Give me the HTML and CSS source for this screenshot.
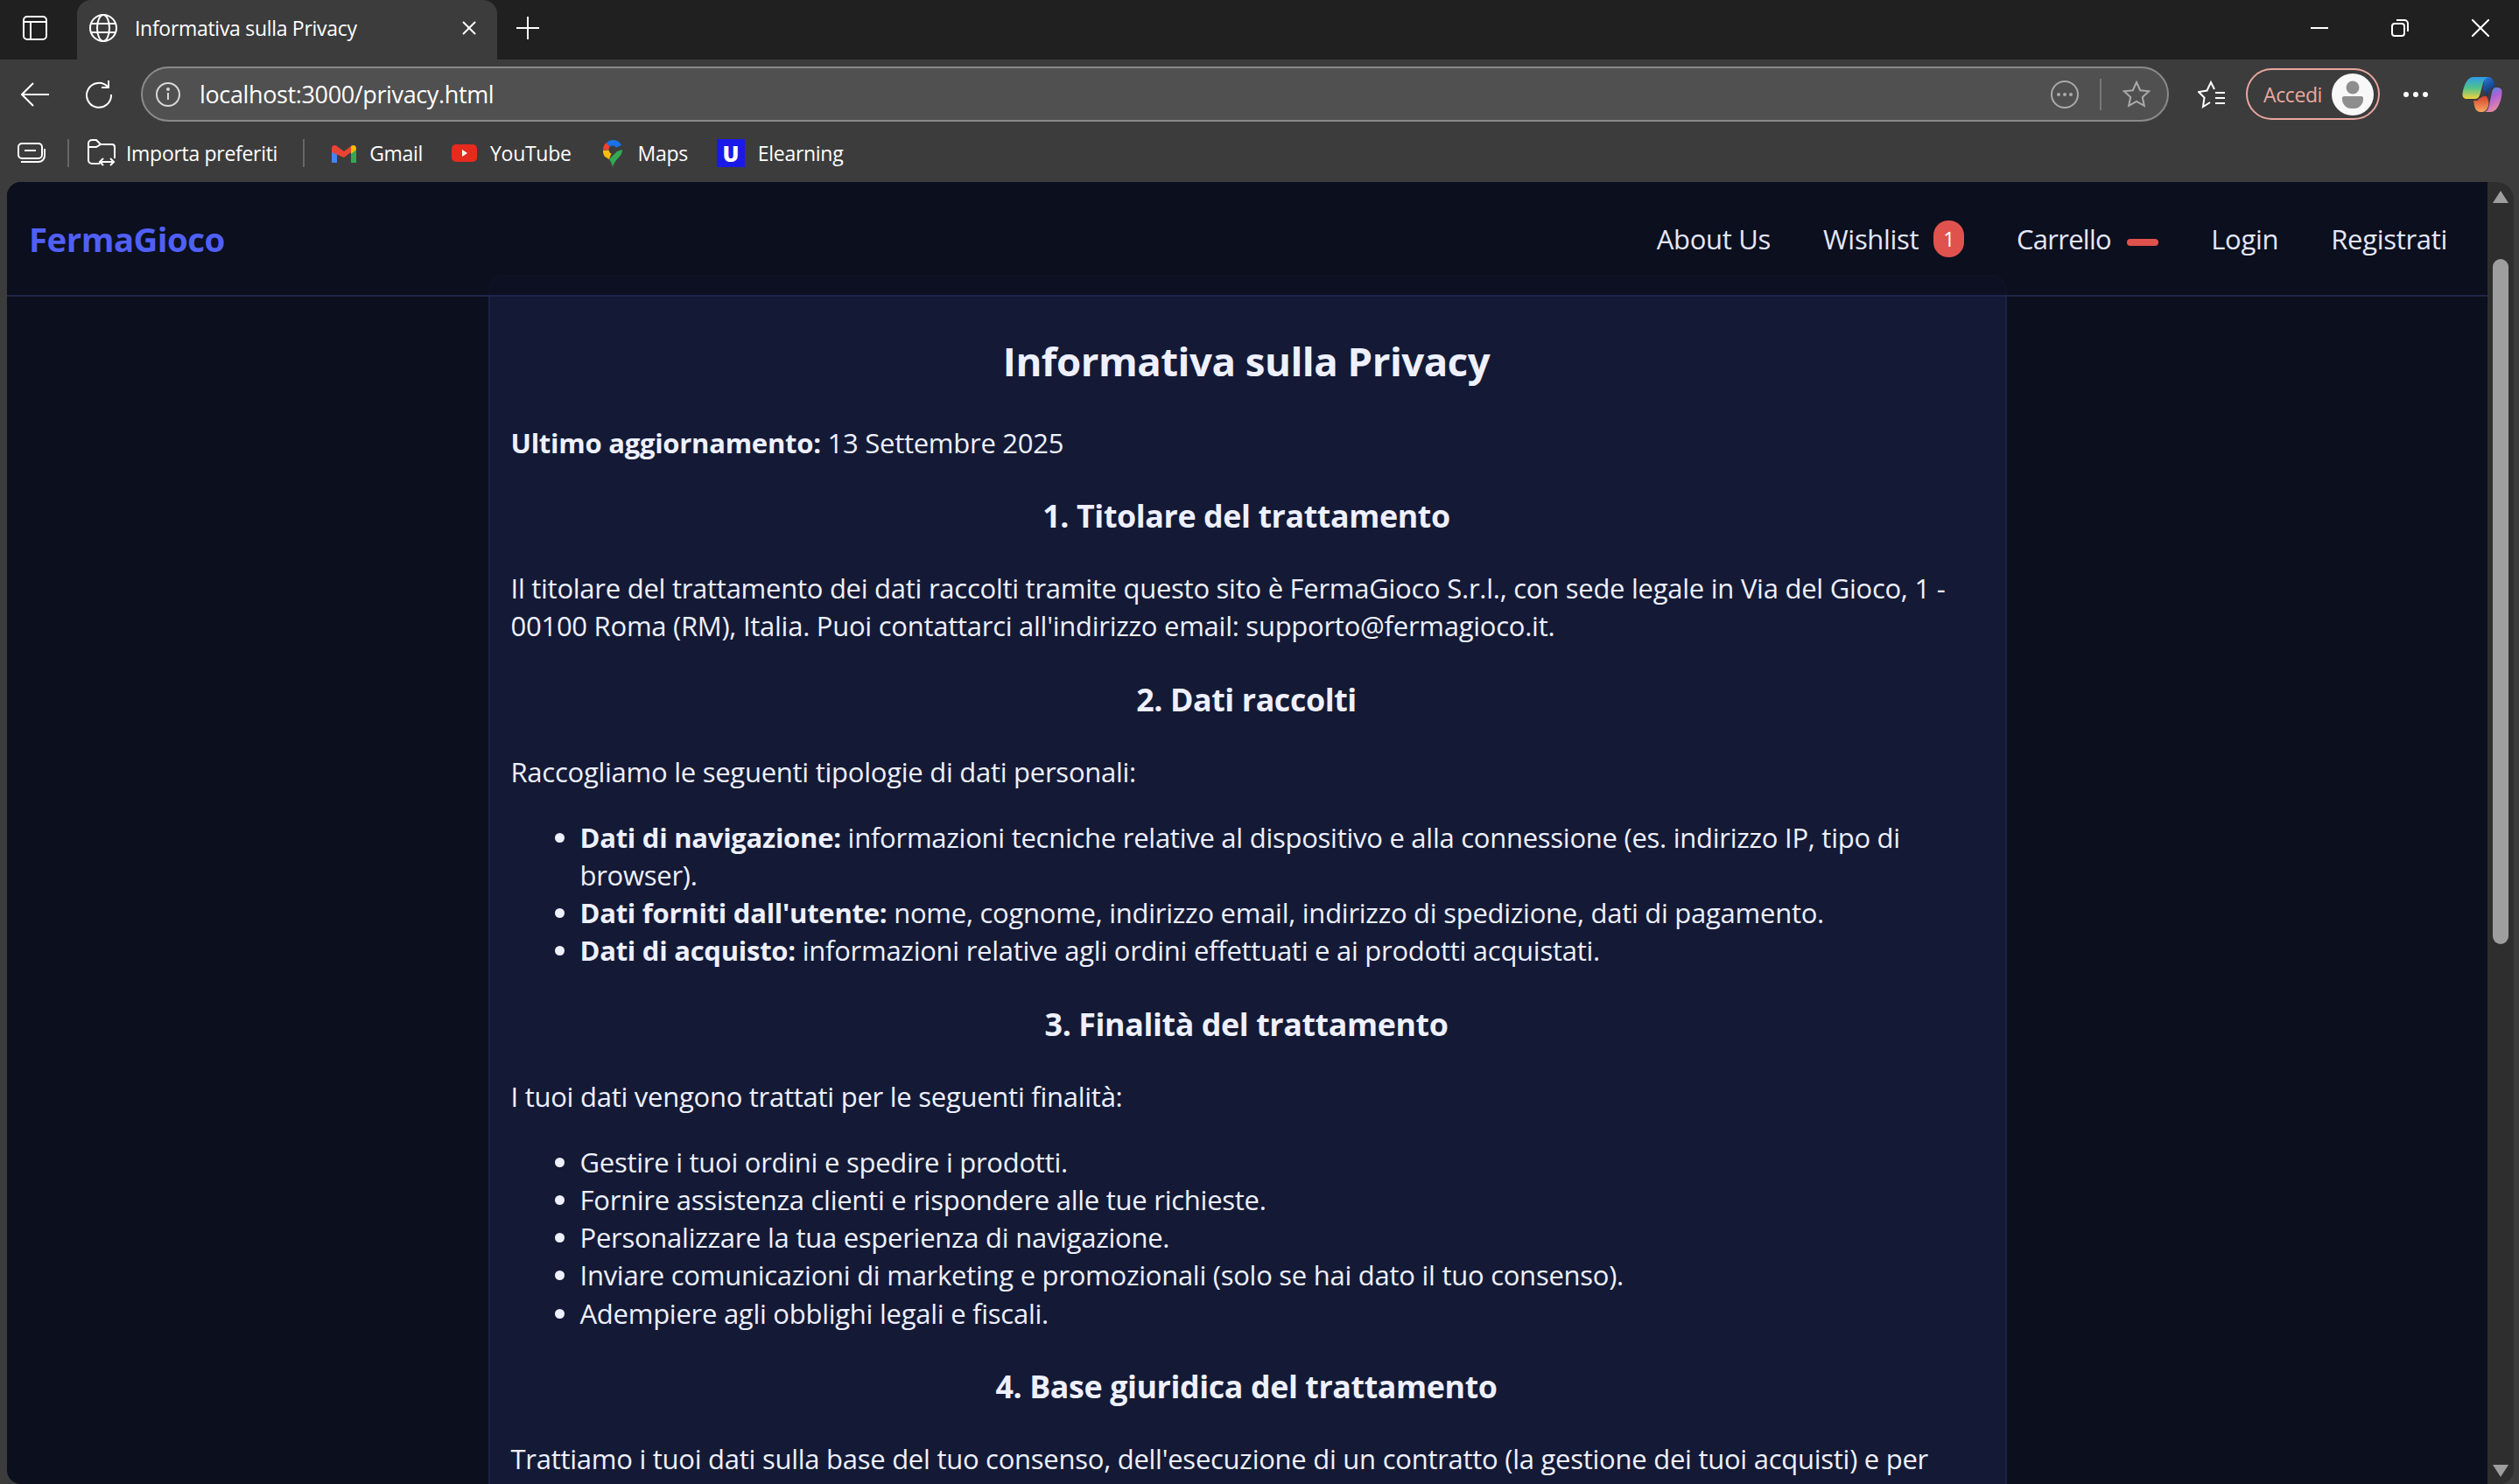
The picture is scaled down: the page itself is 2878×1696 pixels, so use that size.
FILE: index.html
```html
<!DOCTYPE html>
<html lang="it">
<head>
  <meta charset="UTF-8">
  <title>Informativa sulla Privacy</title>
  <link rel="stylesheet" href="styles.css">
</head>
<body>

<div class="tabstrip">
  <svg class="ico sidebar-ico" viewBox="0 0 28 28"><rect x="1" y="1" width="26" height="26" rx="4"/><path d="M1 7h26M9 7v20"/></svg>
  <div class="tab">
    <svg class="ico globe" viewBox="0 0 32 32"><circle cx="16" cy="16" r="15"/><ellipse cx="16" cy="16" rx="7" ry="15"/><path d="M2 11h28M2 21h28"/></svg>
    <span class="tab-title">Informativa sulla Privacy</span>
    <svg class="ico tab-close" viewBox="0 0 16 16"><path d="M1 1l14 14M15 1L1 15"/></svg>
  </div>
  <svg class="ico new-tab" viewBox="0 0 28 28"><path d="M14 1v26M1 14h26"/></svg>
  <div class="win-controls">
    <svg class="ico win-min" viewBox="0 0 20 20"><path d="M0 10h20"/></svg>
    <svg class="ico win-max" viewBox="0 0 20 20"><rect x="1" y="5" width="14" height="14" rx="3"/><path d="M6 1h9a4 4 0 0 1 4 4v9"/></svg>
    <svg class="ico win-close" viewBox="0 0 20 20"><path d="M0 0l20 20M20 0L0 20"/></svg>
  </div>
</div>

<div class="toolbar">
  <svg class="ico back" viewBox="0 0 32 28"><path d="M14 1L1 14l13 13M1 14h31"/></svg>
  <svg class="ico reload" viewBox="0 0 32 32"><path d="M26 7A14 14 0 1 0 30 16"/><path d="M27 0v8h-8"/></svg>
  <div class="addressbar">
    <svg class="ico info" viewBox="0 0 28 28"><circle cx="14" cy="14" r="13"/><path d="M14 12v8"/><circle class="dot" cx="14" cy="8" r="1"/></svg>
    <span class="url">localhost:3000/privacy.html</span>
    <svg class="ico more-circle" viewBox="0 0 32 32"><circle cx="16" cy="16" r="15"/><circle class="dot" cx="9" cy="16" r="1"/><circle class="dot" cx="16" cy="16" r="1"/><circle class="dot" cx="23" cy="16" r="1"/></svg>
    <span class="addr-sep"></span>
    <svg class="ico addr-star" viewBox="0 0 32 32"><path d="M16 2l4.200 9.200 10 1.100-7.400 6.700 2 9.800L16 23.800 7.200 28.800l2-9.800L1.800 12.300l10-1.100z"/></svg>
  </div>
  <svg class="ico fav-list" viewBox="0 0 32 32"><path d="M14 25l-8 5 1.500-10.500L1 13l9.500-1.500L15 2l4 8M20 14h11M20 20h11M20 26h11"/></svg>
  <div class="accedi">
    <span>Accedi</span>
    <span class="avatar">
      <svg viewBox="0 0 48 48"><circle cx="24" cy="16" r="7.500"/><path d="M12 28c0-1 1-2 2-2h20c1 0 2 1 2 2v2c0 5-5 10-10 10h-4c-5 0-10-5-10-10z"/></svg>
    </span>
  </div>
  <div class="dots"><i></i><i></i><i></i></div>
  <svg class="copilot" viewBox="0 0 46 42">
    <defs>
      <linearGradient id="cp1" x1="0.3" y1="0" x2="0.3" y2="1"><stop offset="0" stop-color="#2f9be8"/><stop offset="0.5" stop-color="#52c28a"/><stop offset="1" stop-color="#f2d23c"/></linearGradient>
      <linearGradient id="cp2" x1="0.3" y1="0" x2="0.7" y2="1"><stop offset="0" stop-color="#3f8fe0"/><stop offset="0.4" stop-color="#b060d8"/><stop offset="1" stop-color="#ee8f9a"/></linearGradient>
      <linearGradient id="cp3" x1="0.5" y1="0" x2="0.5" y2="1"><stop offset="0" stop-color="#d8402c"/><stop offset="1" stop-color="#f4a860"/></linearGradient>
      <linearGradient id="cp4" x1="0.3" y1="0" x2="0.7" y2="1"><stop offset="0" stop-color="#2078e0"/><stop offset="1" stop-color="#15224e"/></linearGradient>
    </defs>
    <path fill="url(#cp4)" d="M26 1h4c3 0 5 2 6 5l2 7c-3 0-6 1-7 4l-3 6-4-8z"/>
    <path fill="url(#cp3)" d="M19 26l5-3 4 0 2 5c1 4 0 11-6 13h-3c-4 0-6-3-7-7l-1-6h4c1 0 1-1 2-2z"/>
    <path fill="url(#cp1)" d="M13 1h17c-3 1-5 3-6 7l-4 14c-1 2-2 4-5 4H6c-4 0-6-2-5.500-6C1.500 13 5 1 13 1z"/>
    <path fill="url(#cp2)" d="M38 13h2c4 0 6 2 5.500 7-1 9-5 21-13 21h-8c3 0 5-2 6-6l3-14c1-5 2-8 5-8z"/>
  </svg>
</div>

<div class="bookmarks">
  <svg class="ico bm-stack" viewBox="0 0 32 24"><rect x="1" y="1" width="27" height="17" rx="4"/><path d="M8 9h13M4 22h20a7 7 0 0 0 7-7V7"/></svg>
  <span class="bm-sep"></span>
  <svg class="ico bm-folder" viewBox="0 0 32 32"><path d="M14 28H5a4 4 0 0 1-4-4V5a4 4 0 0 1 4-4h5l5 5h13a3 3 0 0 1 3 3v13M1 9h9l5-3M14 26h16M18 22l-4 4 4 4M26 22l4 4-4 4"/></svg>
  <span class="bm-label bm-import">Importa preferiti</span>
  <span class="bm-sep sep-2"></span>
  <svg class="bm-gmail" viewBox="0 0 28 21"><path fill="#4285f4" d="M0 5v16h6V9z"/><path fill="#34a853" d="M22 9v12h6V5z"/><path fill="#ea4335" d="M0 5c0-4 3-5 6-3l8 6 8-6v7l-8 6L0 9z"/><path fill="#fbbc04" d="M22 2c3-2 6-1 6 3v1l-6 5z"/></svg>
  <span class="bm-label bm-gmail-label">Gmail</span>
  <span class="bm-yt"><i></i></span>
  <span class="bm-label">YouTube</span>
  <svg class="bm-maps" viewBox="0 0 24 32">
    <path fill="#34a853" d="M23 12c0 4-2 7-5 10-3 3-5 6-6 10-1-4-2-6-4-9l9-9z"/>
    <path fill="#fbbc04" d="M3 20C1 17 1 15 1 13l11-1-4 11c-2-1-3-2-5-3z"/>
    <path fill="#ea4335" d="M1 13C1 9 2 6 5 4l6 7z"/>
    <path fill="#1a73e8" d="M5 4c5-5 14-4 17 3l-9 4h-2z"/>
    <circle cx="12" cy="12" r="4.500" fill="#3c3c3c"/>
  </svg>
  <span class="bm-label bm-maps-label">Maps</span>
  <span class="bm-u">U</span>
  <span class="bm-label">Elearning</span>
</div>

<div class="viewport">
  <div class="page">
    <header class="site-header">
      <a class="logo">FermaGioco</a>
      <nav class="site-nav">
        <a>About Us</a>
        <a>Wishlist <span class="badge">1</span></a>
        <a class="nav-cart">Carrello <span class="badge badge-empty"></span></a>
        <a>Login</a>
        <a>Registrati</a>
      </nav>
    </header>

    <main class="policy">
      <h1>Informativa sulla Privacy</h1>
      <p><strong>Ultimo aggiornamento:</strong> 13 Settembre 2025</p>

      <h2>1. Titolare del trattamento</h2>
      <p>Il titolare del trattamento dei dati raccolti tramite questo sito è FermaGioco S.r.l., con sede legale in Via del Gioco, 1 - 00100 Roma (RM), Italia. Puoi contattarci all'indirizzo email: supporto@fermagioco.it.</p>

      <h2>2. Dati raccolti</h2>
      <p>Raccogliamo le seguenti tipologie di dati personali:</p>
      <ul>
        <li><strong>Dati di navigazione:</strong> informazioni tecniche relative al dispositivo e alla connessione (es. indirizzo IP, tipo di browser).</li>
        <li><strong>Dati forniti dall'utente:</strong> nome, cognome, indirizzo email, indirizzo di spedizione, dati di pagamento.</li>
        <li><strong>Dati di acquisto:</strong> informazioni relative agli ordini effettuati e ai prodotti acquistati.</li>
      </ul>

      <h2>3. Finalità del trattamento</h2>
      <p>I tuoi dati vengono trattati per le seguenti finalità:</p>
      <ul>
        <li>Gestire i tuoi ordini e spedire i prodotti.</li>
        <li>Fornire assistenza clienti e rispondere alle tue richieste.</li>
        <li>Personalizzare la tua esperienza di navigazione.</li>
        <li>Inviare comunicazioni di marketing e promozionali (solo se hai dato il tuo consenso).</li>
        <li>Adempiere agli obblighi legali e fiscali.</li>
      </ul>

      <h2>4. Base giuridica del trattamento</h2>
      <p>Trattiamo i tuoi dati sulla base del tuo consenso, dell'esecuzione di un contratto (la gestione dei tuoi acquisti) e per</p>
    </main>
  </div>

  <div class="scrollbar">
    <span class="arrow-up"></span>
    <span class="thumb"></span>
    <span class="arrow-down"></span>
  </div>
</div>

</body>
</html>
```

FILE: styles.css
```css
* { box-sizing: border-box; }
html, body { height: 100%; }
body { margin: 0; height: 100vh; overflow: hidden; display: flex; flex-direction: column; background-color: #3c3c3c; color: #fff; font-family: "Open Sans", "Noto Sans", sans-serif; }

.ico { display: block; flex: none; fill: none; stroke: #fff; stroke-width: 2; }
.ico .dot { fill: currentColor; }

/* tabs */
.tabstrip { height: 68px; flex: none; display: flex; align-items: center; background-color: #202020; padding-left: 26px; }
.sidebar-ico { width: 28px; height: 28px; margin-top: -4px; }
.tab { width: 480px; height: 68px; margin-left: 34px; display: flex; align-items: center; padding: 0 0 4px 14px; background-color: #3c3c3c; border-radius: 16px 16px 0 0; }
.globe { width: 32px; height: 32px; }
.tab-title { margin-left: 20px; font-size: 23px; letter-spacing: -0.3px; white-space: nowrap; }
.tab-close { width: 16px; height: 16px; margin-left: 120px; }
.new-tab { width: 28px; height: 28px; margin-left: 21px; margin-top: -4px; }
.win-controls { margin-left: auto; display: flex; align-items: center; gap: 72px; padding-right: 34px; margin-top: -4px; }
.win-controls svg { width: 20px; height: 20px; }

/* toolbar */
.toolbar { height: 82px; flex: none; display: flex; align-items: center; padding: 0 0 3px 24px; }
.back { width: 32px; height: 28px; }
.reload { width: 32px; height: 32px; margin-left: 41px; }
.addressbar { width: 2317px; height: 63px; margin-left: 32px; display: flex; align-items: center; padding-left: 15px; background-color: #505050; border: 2px solid #8a8a8a; border-radius: 32px; }
.info { width: 28px; height: 28px; color: #d8d8d8; stroke: #d8d8d8; }
.url { margin-left: 22px; font-size: 27px; letter-spacing: -0.37px; }
.more-circle { width: 32px; height: 32px; margin-left: auto; stroke: #aaa; color: #aaa; }
.addr-sep { width: 2px; height: 36px; margin-left: 24px; background-color: #777; }
.addr-star { width: 32px; height: 32px; margin-left: 24px; margin-right: 19px; stroke: #aaa; }
.fav-list { width: 32px; height: 32px; margin-left: 33px; }
.accedi { width: 153px; height: 59px; margin-left: 23px; display: flex; align-items: center; justify-content: space-between; padding: 0 5px 0 18px; border: 2px solid #e8a8a0; border-radius: 30px; color: #e8a8a0; font-size: 23px; letter-spacing: -0.4px; }
.avatar { width: 48px; height: 48px; border-radius: 50%; background-color: #f8f8f8; }
.avatar svg { display: block; fill: #8e8e8e; }
.dots { margin-left: 27px; display: flex; gap: 5px; }
.dots i { width: 6px; height: 6px; border-radius: 50%; background-color: #fff; }
.copilot { width: 46px; height: 42px; margin-left: 39px; flex: none; }

/* bookmarks */
.bookmarks { height: 58px; flex: none; display: flex; align-items: center; padding-left: 20px; padding-bottom: 8px; }
.bm-stack { width: 32px; height: 24px; }
.bm-sep { width: 2px; height: 32px; margin-left: 25px; background-color: #666; }
.bm-folder { width: 32px; height: 32px; margin-left: 21px; }
.bm-label { font-size: 23px; letter-spacing: -0.3px; margin-left: 15px; white-space: nowrap; }
.bm-import { margin-left: 12px; }
.sep-2 { margin-left: 29px; }
.bm-gmail { width: 28px; height: 21px; margin-left: 31px; flex: none; }
.bm-gmail-label { margin-left: 15px; }
.bm-yt { width: 29px; height: 20px; margin-left: 33px; border-radius: 5px; background-color: #e62b1e; display: flex; align-items: center; justify-content: center; flex: none; }
.bm-yt i { border-left: 6px solid #fff; border-top: 4px solid transparent; border-bottom: 4px solid transparent; }
.bm-maps { width: 24px; height: 32px; margin-left: 35px; flex: none; }
.bm-maps-label { margin-left: 17px; }
.bm-u { width: 32px; height: 32px; margin-left: 33px; background-color: #1a1ae8; color: #fff; font-size: 25px; font-weight: 800; text-align: center; line-height: 32px; flex: none; }

/* browser viewport */
.viewport { flex: 1; min-height: 0; display: flex; margin: 0 6px 0 8px; border-radius: 16px 20px 16px 16px; overflow: hidden; background-color: #2e2e2e; }
.page { flex: 1; min-width: 0; background-color: #0c0f1e; overflow: hidden; }
.scrollbar { width: 30px; flex: none; display: flex; flex-direction: column; align-items: center; padding: 10px 0 8px; }
.arrow-up { width: 0; height: 0; border-left: 9px solid transparent; border-right: 9px solid transparent; border-bottom: 14px solid #9e9e9e; }
.thumb { width: 18px; height: 783px; margin-top: 64px; background-color: #9e9e9e; border-radius: 9px; }
.arrow-down { width: 0; height: 0; margin-top: auto; border-left: 9px solid transparent; border-right: 9px solid transparent; border-top: 14px solid #9e9e9e; }

/* site */
.site-header { position: relative; z-index: 2; height: 131px; display: flex; align-items: center; justify-content: space-between; padding: 0 46px 0 25px; background-color: rgba(12, 15, 30, 0.85); border-bottom: 2px solid #1e2549; }
.logo { color: #5060f5; font-size: 38.4px; font-weight: 700; letter-spacing: -0.5px; }
.site-nav { display: flex; align-items: center; gap: 60px; }
.site-nav a { display: flex; align-items: center; color: #e4e7fb; font-size: 31px; letter-spacing: -0.3px; white-space: pre; }
.site-nav .nav-cart { letter-spacing: -0.75px; }
.badge { width: 35px; height: 42px; margin-left: 9px; border-radius: 17px; background-color: #e0524d; color: #fff; font-size: 23px; line-height: 42px; text-align: center; }
.badge-empty { width: 36px; height: 8px; margin-left: 11px; margin-top: 8px; border-radius: 4px; }

.policy { width: 1735px; margin: -25px auto 0; padding: 64px 26px 200px 24px; background-color: #141a35; border: 2px solid #1c2244; border-radius: 18px 18px 0 0; font-size: 31px; line-height: 43.2px; color: #eef0ff; }
.policy h1 { margin: 0 0 40px; text-align: center; font-size: 45.6px; line-height: 65px; letter-spacing: -0.5px; }
.policy h2 { margin: 36px 0 37px; text-align: center; font-size: 35.800px; line-height: 50px; letter-spacing: -0.4px; }
.policy p { margin: 32px 0; letter-spacing: -0.26px; }
.policy ul { margin: 32px 0; padding-left: 79px; letter-spacing: -0.26px; }
```
